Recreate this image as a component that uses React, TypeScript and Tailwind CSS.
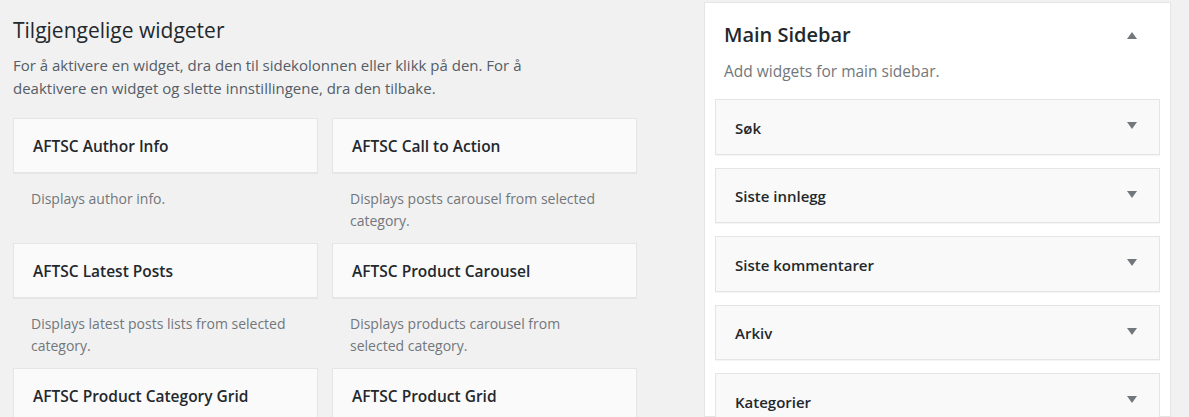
const available = [
  { title: "AFTSC Author Info", desc: "Displays author info." },
  { title: "AFTSC Call to Action", desc: "Displays posts carousel from selected category." },
  { title: "AFTSC Latest Posts", desc: "Displays latest posts lists from selected category." },
  { title: "AFTSC Product Carousel", desc: "Displays products carousel from selected category." },
  { title: "AFTSC Product Category Grid", desc: "Displays product categories grid." },
  { title: "AFTSC Product Grid", desc: "Displays products grid from selected category." },
];

const sidebarWidgets = ["Søk", "Siste innlegg", "Siste kommentarer", "Arkiv", "Kategorier"];

function Arrow({ up = false }: { up?: boolean }) {
  return (
    <svg width="10" height="7" viewBox="0 0 10 7" className="shrink-0">
      <path d={up ? "M0 7 L5 0 L10 7 Z" : "M0 0 L10 0 L5 7 Z"} fill="#72777c" />
    </svg>
  );
}

export default function App() {
  return (
    <div
      className="flex h-[417px] w-[1189px] overflow-hidden bg-[#f1f1f1] text-[#23282d]"
      style={{ fontFamily: '"Open Sans", "Noto Sans", sans-serif' }}
    >
      <div className="w-[637px] shrink-0 pl-[13px]">
        <h2 className="mt-[16px] text-[21px] leading-[28px] font-normal">Tilgjengelige widgeter</h2>
        <p className="mt-[10px] w-[545px] text-[15px] leading-[23px] text-[#555d66]">
          For å aktivere en widget, dra den til sidekolonnen eller klikk på den. For å deaktivere en widget og slette
          innstillingene, dra den tilbake.
        </p>
        <div className="mt-[18px] grid grid-cols-2 gap-x-[14px]">
          {available.map((w) => (
            <div key={w.title} className="h-[125px]">
              <div className="flex h-[55px] items-center border border-[#e5e5e5] bg-[#fafafa] px-[19px] pt-[2px] shadow-[0_1px_1px_rgba(0,0,0,0.04)]">
                <span className="text-[15.5px] font-semibold">{w.title}</span>
              </div>
              <p className="pt-[15px] pl-[18px] pr-[20px] text-[14px] leading-[22px] text-[#72777c]">{w.desc}</p>
            </div>
          ))}
        </div>
      </div>

      <div className="ml-[67px] mt-[2px] w-[467px] shrink-0 border border-[#e5e5e5] bg-white px-[10px] shadow-[0_1px_1px_rgba(0,0,0,0.04)]">
        <div className="flex items-center justify-between pl-[9px] pr-[23px] pt-[18px]">
          <h2 className="text-[20px] leading-[28px] font-semibold">Main Sidebar</h2>
          <Arrow up />
        </div>
        <p className="mt-[12px] pl-[9px] text-[15.5px] leading-[20px] text-[#72777c]">Add widgets for main sidebar.</p>
        <div className="mt-[18px] flex flex-col gap-[13px]">
          {sidebarWidgets.map((name) => (
            <div
              key={name}
              className="flex h-[55.5px] shrink-0 items-center justify-between border border-[#e5e5e5] bg-[#f9f9f9] pl-[19px] pr-[22px] shadow-[0_1px_1px_rgba(0,0,0,0.04)]"
            >
              <span className="pt-[2px] text-[15px] font-semibold">{name}</span>
              <div className="-mt-[2px]">
                <Arrow />
              </div>
            </div>
          ))}
        </div>
      </div>
    </div>
  );
}
